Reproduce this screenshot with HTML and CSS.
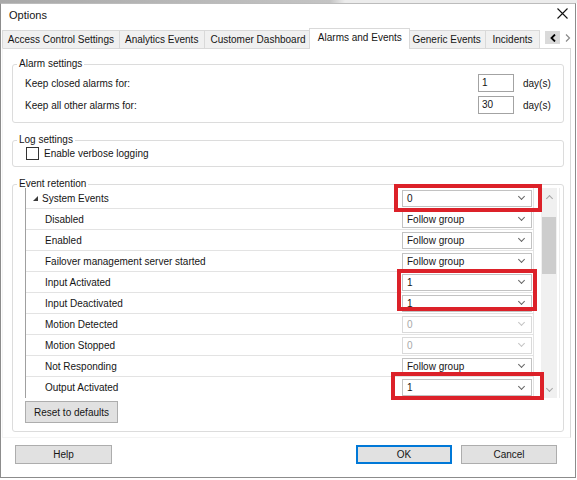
FILE: index.html
```html
<!DOCTYPE html>
<html lang="en">
<head>
  <meta charset="UTF-8" />
  <title>Options</title>
  <link rel="stylesheet" href="styles.css">
</head>
<body>
  <div class="behind"></div>
  <div class="window">
    <div class="titlebar">
      <span class="title">Options</span>
      <svg class="close" width="11" height="11" viewBox="0 0 11 11">
        <path d="M0.5 0.5 L10.5 10.5 M10.5 0.5 L0.5 10.5" stroke="#111" stroke-width="1.1" fill="none"/>
      </svg>
    </div>

    <!-- tab strip -->
    <div class="tabs">
      <div class="tab t1">Access Control Settings</div>
      <div class="tab t2">Analytics Events</div>
      <div class="tab t3">Customer Dashboard</div>
      <div class="tab t4 selected">Alarms and Events</div>
      <div class="tab t5">Generic Events</div>
      <div class="tab t6">Incidents</div>
      <div class="tab-scroll">
        <span class="arrow on">
          <svg width="6" height="8" viewBox="0 0 6 8"><path d="M5 0.5 L1.5 4 L5 7.5" stroke="#000" stroke-width="1.8" fill="none"/></svg>
        </span>
        <span class="arrow">
          <svg width="6" height="8" viewBox="0 0 6 8"><path d="M1 0.5 L4.5 4 L1 7.5" stroke="#8a8a8a" stroke-width="1.2" fill="none"/></svg>
        </span>
      </div>
    </div>

    <div class="panel">
      <fieldset class="group alarm">
        <legend>Alarm settings</legend>
        <div class="field">
          <span class="label">Keep closed alarms for:</span>
          <span class="num">1</span>
          <span class="unit">day(s)</span>
        </div>
        <div class="field">
          <span class="label">Keep all other alarms for:</span>
          <span class="num">30</span>
          <span class="unit">day(s)</span>
        </div>
      </fieldset>

      <fieldset class="group log">
        <legend>Log settings</legend>
        <label class="checkrow"><span class="check"></span>Enable verbose logging</label>
      </fieldset>

      <fieldset class="group retention">
        <legend>Event retention</legend>
        <div class="grid">
          <div class="rows">
            <div class="row cat">
              <span class="name">
                <svg class="expander" width="5" height="5" viewBox="0 0 5 5"><polygon points="5,0 5,5 0,5" fill="#3a3a3a"/></svg>
                System Events
              </span>
              <span class="combo">0<i class="chev"></i></span>
            </div>
            <div class="row"><span class="name">Disabled</span><span class="combo">Follow group<i class="chev"></i></span></div>
            <div class="row"><span class="name">Enabled</span><span class="combo">Follow group<i class="chev"></i></span></div>
            <div class="row"><span class="name">Failover management server started</span><span class="combo">Follow group<i class="chev"></i></span></div>
            <div class="row"><span class="name">Input Activated</span><span class="combo">1<i class="chev"></i></span></div>
            <div class="row"><span class="name">Input Deactivated</span><span class="combo">1<i class="chev"></i></span></div>
            <div class="row"><span class="name">Motion Detected</span><span class="combo disabled">0<i class="chev"></i></span></div>
            <div class="row"><span class="name">Motion Stopped</span><span class="combo disabled">0<i class="chev"></i></span></div>
            <div class="row"><span class="name">Not Responding</span><span class="combo">Follow group<i class="chev"></i></span></div>
            <div class="row"><span class="name">Output Activated</span><span class="combo">1<i class="chev"></i></span></div>
          </div>
          <div class="scrollbar">
            <span class="sb-btn"><i class="chev up"></i></span>
            <span class="thumb"></span>
            <span class="sb-btn bottom"><i class="chev"></i></span>
          </div>

          <!-- red annotation boxes -->
          <span class="mark m1"></span>
          <span class="mark m2"></span>
          <span class="mark m3"></span>
        </div>
        <button class="btn reset">Reset to defaults</button>
      </fieldset>
    </div>

    <div class="actions">
      <button class="btn help">Help</button>
      <button class="btn ok">OK</button>
      <button class="btn cancel">Cancel</button>
    </div>
  </div>
</body>
</html>
```

FILE: styles.css
```css
* {
  box-sizing: border-box;
}

body {
  margin: 0;
  width: 577px;
  height: 480px;
  overflow: hidden;
  background: #fff;
  font-family: "Liberation Sans", Arial, sans-serif;
  font-size: 10px;
  color: #151515;
}

.behind {
  height: 3px;
  background: linear-gradient(90deg, #a9a9a9 0, #c4c4c4 330px, #ececec 345px);
}

.window {
  width: 576px;
  height: 475px;
  border: 1px solid #8c8c8c;
  border-top-color: #bcbcbc;
  display: flex;
  flex-direction: column;
}

.titlebar {
  height: 22px;
  display: flex;
  align-items: center;
  justify-content: space-between;
  padding: 0 7px 0 8px;
}

.title {
  font-size: 11px;
}

.close {
  align-self: flex-start;
  margin-top: 4px;
}

/* tabs */
.tabs {
  height: 22px;
  display: flex;
  align-items: flex-end;
  padding-left: 1px;
  position: relative;
  z-index: 1;
}

.tab {
  height: 18px;
  line-height: 17px;
  text-align: center;
  white-space: nowrap;
  background: #f0f0f0;
  border: 1px solid #d9d9d9;
  border-bottom: 0;
  margin-left: -1px;
}

.tab.t1 { width: 118px; margin-left: 0; }
.tab.t2 { width: 86px; }
.tab.t3 { width: 109px; }
.tab.t4 { width: 101px; margin-left: -3px; }
.tab.t5 { width: 79px; margin-left: -3px; }
.tab.t6 { width: 55px; }

.tab.selected {
  height: 21px;
  line-height: 18px;
  margin-bottom: -1px;
  background: #fff;
  position: relative;
  z-index: 2;
}

.tab-scroll {
  display: flex;
  align-items: center;
  height: 18px;
  margin-left: 5px;
  padding-bottom: 3px;
}

.arrow {
  width: 15px;
  height: 13px;
  display: flex;
  align-items: center;
  justify-content: center;
}

.arrow.on {
  background: #dadada;
}

/* panel */
.panel {
  height: 390px;
  margin: 0 4px 0 1px;
  border: 1px solid #f4f4f4;
  border-top-color: #d9d9d9;
  border-right-color: #d9d9d9;
}

.group {
  margin: 0 6px 0 9px;
  border: 1px solid #dcdcdc;
  border-radius: 3px;
  min-width: 0;
}

.group legend {
  padding: 0 2px;
  margin-left: -8px;
  line-height: 12px;
}

.alarm {
  margin-top: 9px;
  padding: 4px 0 8px 12px;
}

.log {
  margin-top: 11px;
  padding: 1px 0 6px 12px;
}

.retention {
  margin-top: 11px;
  padding: 0 0 8px 12px;
}

.field {
  display: flex;
  align-items: center;
  height: 18px;
}

.field + .field {
  margin-top: 4px;
}

.field .label {
  flex: 1;
}

.num {
  width: 36px;
  height: 18px;
  line-height: 16px;
  padding-left: 3px;
  border: 1px solid #a3a3a3;
}

.unit {
  width: 40px;
  margin-left: 9px;
}

.checkrow {
  display: flex;
  align-items: center;
  height: 13px;
}

.check {
  width: 13px;
  height: 13px;
  border: 1px solid #333;
  background: #fff;
  margin: 0 5px 0 1px;
}

/* property grid */
.grid {
  position: relative;
  display: flex;
  width: 535px;
  height: 210px;
  margin-top: -2px;
  border-left: 1px solid #a0a0a0;
  border-right: 1px solid #ececec;
}

.rows {
  width: 508px;
  border-right: 1px solid #e3e3e3;
}

.row {
  height: 21px;
  display: flex;
  align-items: center;
  border-bottom: 1px solid #e3e3e3;
}

.row:last-child {
  border-bottom: 0;
}

.name {
  flex: 1;
  padding-left: 19px;
  white-space: nowrap;
}

.cat .name {
  display: flex;
  align-items: center;
  padding-left: 7px;
}

.expander {
  margin-right: 4px;
  margin-top: 1px;
}

.combo {
  width: 130px;
  height: 17px;
  margin-right: 1px;
  display: flex;
  align-items: center;
  justify-content: space-between;
  padding: 0 7px 0 4px;
  border: 1px solid #c2c2c2;
  background: #fff;
}

.combo.disabled {
  color: #a8a8a8;
  border-color: #dadada;
}

.chev {
  width: 5px;
  height: 5px;
  border-right: 1px solid #666;
  border-bottom: 1px solid #666;
  transform: rotate(45deg);
  margin-top: -3px;
}

.combo.disabled .chev {
  border-color: #c4c4c4;
}

.scrollbar {
  width: 16px;
  margin-left: 7px;
  background: #f0f0f0;
  display: flex;
  flex-direction: column;
  align-items: center;
}

.sb-btn {
  height: 17px;
  width: 16px;
  display: flex;
  align-items: center;
  justify-content: center;
}

.sb-btn .chev {
  border-color: #a6a6a6;
}

.sb-btn .chev.up {
  transform: rotate(-135deg);
  margin-top: 3px;
}

.sb-btn.bottom {
  margin-top: auto;
}

.thumb {
  width: 14px;
  height: 57px;
  margin-top: 12px;
  background: #cdcdcd;
}

.mark {
  position: absolute;
  border: 4px solid #dc2129;
}

.mark.m1 { left: 368px; top: -4px; width: 148px; height: 28px; }
.mark.m2 { left: 371px; top: 81px; width: 140px; height: 42px; }
.mark.m3 { left: 365px; top: 184px; width: 153px; height: 28px; }

/* buttons */
.btn {
  font-family: inherit;
  font-size: 10px;
  color: #151515;
  background: #e1e1e1;
  border: 1px solid #adadad;
  padding: 0;
}

.reset {
  display: block;
  width: 93px;
  height: 22px;
  margin-top: 3px;
}

.actions {
  display: flex;
  margin-top: 7px;
  padding: 0 18px 0 14px;
}

.actions .btn {
  height: 19px;
  width: 96px;
}

.actions .help {
  width: 97px;
}

.actions .ok {
  margin-left: auto;
  border-color: #0078d7;
  box-shadow: inset 0 0 0 1px #0078d7;
}

.actions .cancel {
  margin-left: 9px;
}
```
